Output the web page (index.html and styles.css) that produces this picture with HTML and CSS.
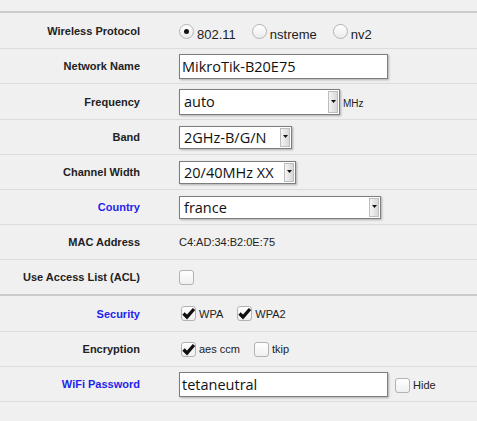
FILE: index.html
```html
<!DOCTYPE html>
<html>
<head>
<meta charset="utf-8">
<link rel="stylesheet" href="styles.css">
</head>
<body>
<div class="form">
  <div class="row h35">
    <div class="label">Wireless Protocol</div>
    <div class="value radios">
      <label class="ropt"><span class="radio on"></span><span class="rtext">802.11</span></label>
      <label class="ropt"><span class="radio"></span><span class="rtext">nstreme</span></label>
      <label class="ropt"><span class="radio"></span><span class="rtext">nv2</span></label>
    </div>
  </div>
  <div class="row">
    <div class="label">Network Name</div>
    <div class="value"><div class="input">MikroTik-B20E75</div></div>
  </div>
  <div class="row h35">
    <div class="label">Frequency</div>
    <div class="value">
      <div class="select w-freq"><span class="val">auto</span><span class="arrow"><svg width="5" height="3" viewBox="0 0 5 3"><polygon points="0,0 5,0 2.5,3" fill="#111"/></svg></span></div>
      <span class="unit">MHz</span>
    </div>
  </div>
  <div class="row">
    <div class="label">Band</div>
    <div class="value">
      <div class="select w-band"><span class="val">2GHz-B/G/N</span><span class="arrow"><svg width="5" height="3" viewBox="0 0 5 3"><polygon points="0,0 5,0 2.5,3" fill="#111"/></svg></span></div>
    </div>
  </div>
  <div class="row">
    <div class="label">Channel Width</div>
    <div class="value">
      <div class="select w-chan"><span class="val">20/40MHz XX</span><span class="arrow"><svg width="5" height="3" viewBox="0 0 5 3"><polygon points="0,0 5,0 2.5,3" fill="#111"/></svg></span></div>
    </div>
  </div>
  <div class="row">
    <div class="label blue">Country</div>
    <div class="value">
      <div class="select w-country"><span class="val">france</span><span class="arrow"><svg width="5" height="3" viewBox="0 0 5 3"><polygon points="0,0 5,0 2.5,3" fill="#111"/></svg></span></div>
    </div>
  </div>
  <div class="row">
    <div class="label">MAC Address</div>
    <div class="value"><span class="plain">C4:AD:34:B2:0E:75</span></div>
  </div>
  <div class="row sep">
    <div class="label">Use Access List (ACL)</div>
    <div class="value"><span class="cb"></span></div>
  </div>
  <div class="row h35">
    <div class="label blue">Security</div>
    <div class="value checks">
      <label class="copt"><span class="cb on"><svg width="15" height="15" viewBox="0 0 15 15"><path d="M2.5 7.5 L6 11 L13 3" fill="none" stroke="#111" stroke-width="3.3"/></svg></span><span class="ctext">WPA</span></label>
      <label class="copt"><span class="cb on"><svg width="15" height="15" viewBox="0 0 15 15"><path d="M2.5 7.5 L6 11 L13 3" fill="none" stroke="#111" stroke-width="3.3"/></svg></span><span class="ctext">WPA2</span></label>
    </div>
  </div>
  <div class="row">
    <div class="label">Encryption</div>
    <div class="value checks">
      <label class="copt"><span class="cb on"><svg width="15" height="15" viewBox="0 0 15 15"><path d="M2.5 7.5 L6 11 L13 3" fill="none" stroke="#111" stroke-width="3.3"/></svg></span><span class="ctext">aes ccm</span></label>
      <label class="copt"><span class="cb"></span><span class="ctext">tkip</span></label>
    </div>
  </div>
  <div class="row">
    <div class="label blue">WiFi Password</div>
    <div class="value">
      <div class="input">tetaneutral</div>
      <label class="copt hide"><span class="cb"></span><span class="ctext">Hide</span></label>
    </div>
  </div>
</div>
</body>
</html>
```
FILE: styles.css
```css
html, body {
  margin: 0;
  padding: 0;
  background: #f0f0f0;
}
body {
  font-family: "Liberation Sans", Arial, sans-serif;
  color: #222;
}
.form {
  margin-top: 11px;
  border-top: 2px solid #cbcbcb;
}
.row {
  display: flex;
  align-items: center;
  height: 34px;
  border-bottom: 1px solid #dcdcdc;
}
.row.h35 {
  height: 35px;
}
.row.sep {
  border-bottom: 2px solid #cbcbcb;
}
.label {
  width: 140px;
  margin-right: 39px;
  text-align: right;
  font-weight: bold;
  font-size: 11px;
  color: #222;
  flex: none;
}
.label.blue {
  color: #1f1fee;
}
.value {
  display: flex;
  align-items: center;
}
.radios {
  align-items: flex-end;
  padding-top: 2px;
}
.ropt {
  display: flex;
  align-items: flex-end;
  margin-right: 16px;
}
.radio {
  width: 15px;
  height: 15px;
  box-sizing: border-box;
  border-radius: 50%;
  border: 1px solid #b4b4b4;
  background: linear-gradient(#ffffff, #ebebeb);
  display: flex;
  align-items: center;
  justify-content: center;
  margin-right: 3px;
}
.radio.on::after {
  content: "";
  width: 5px;
  height: 5px;
  border-radius: 50%;
  background: #111;
}
.rtext {
  font-size: 13px;
  line-height: 13px;
  margin-bottom: -2px;
  color: #222;
}
.input {
  width: 209px;
  height: 25px;
  box-sizing: border-box;
  background: #fff;
  border: 1px solid #7d7d7d;
  box-shadow: 1px 1px 2px rgba(0,0,0,0.28);
  font-family: "Open Sans", "Noto Sans", sans-serif;
  font-size: 14.5px;
  line-height: 23px;
  padding-left: 2px;
  color: #111;
}
.select {
  display: flex;
  align-items: stretch;
  height: 23px;
  box-sizing: border-box;
  background: #fff;
  border: 1px solid #7d7d7d;
  box-shadow: 1px 1px 2px rgba(0,0,0,0.28);
}
.select .val {
  flex: 1;
  padding-left: 4px;
  font-family: "Open Sans", "Noto Sans", sans-serif;
  font-size: 14.5px;
  line-height: 21px;
  color: #111;
  white-space: nowrap;
  overflow: hidden;
}
.select .arrow {
  width: 8px;
  margin: 1px;
  background: linear-gradient(90deg, #f4f4f4, #d8d8d8);
  border: 1px solid #bdbdbd;
  display: flex;
  align-items: center;
  justify-content: center;
}
.select .arrow svg {
  margin-top: -1px;
}
.w-freq {
  width: 161px;
  height: 26px;
}
.w-freq .val {
  line-height: 24px;
}
.w-band {
  width: 113px;
}
.w-chan {
  width: 117px;
}
.w-country {
  width: 202px;
}
.unit {
  font-size: 10px;
  margin-left: 3px;
  margin-top: 4px;
  color: #222;
}
.plain {
  font-size: 11px;
  color: #222;
}
.cb {
  width: 15px;
  height: 15px;
  box-sizing: border-box;
  border: 1px solid #b2b2b2;
  border-radius: 3px;
  background: linear-gradient(#ffffff, #f0f0f0);
  display: block;
  position: relative;
  flex: none;
}
.cb svg {
  position: absolute;
  left: -1px;
  top: -1px;
}
.checks {
  padding-left: 2px;
}
.copt {
  display: flex;
  align-items: center;
  margin-right: 14px;
}
.ctext {
  font-size: 11px;
  margin-left: 3px;
  color: #222;
}
.copt.hide {
  margin-left: 7px;
  margin-top: 2px;
}
```
